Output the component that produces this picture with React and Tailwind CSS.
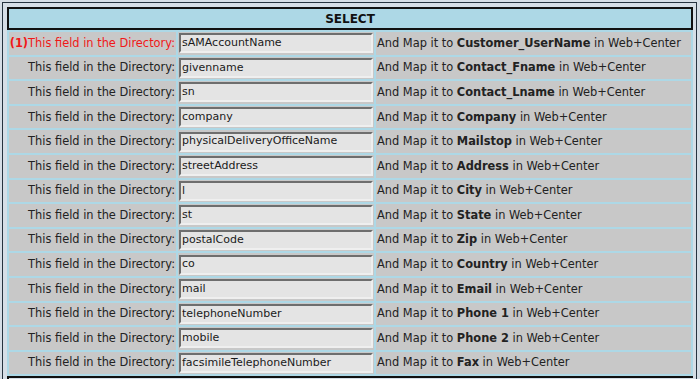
const rows = [
  ['sAMAccountName', 'Customer_UserName'],
  ['givenname', 'Contact_Fname'],
  ['sn', 'Contact_Lname'],
  ['company', 'Company'],
  ['physicalDeliveryOfficeName', 'Mailstop'],
  ['streetAddress', 'Address'],
  ['l', 'City'],
  ['st', 'State'],
  ['postalCode', 'Zip'],
  ['co', 'Country'],
  ['mail', 'Email'],
  ['telephoneNumber', 'Phone 1'],
  ['mobile', 'Phone 2'],
  ['facsimileTelephoneNumber', 'Fax'],
]

const font = { fontFamily: '"DejaVu Sans", Verdana, sans-serif' }

export default function App() {
  return (
    <div className="w-[700px] h-[379px] overflow-hidden bg-[#d6dee6] pt-[2px] pl-[2px] text-[11.4px] text-[#222]" style={font}>
      <div className="w-[695px] h-[400px] border-l border-t border-r border-[#26333f] pt-[4px] pl-[4px] pr-[3px]">
        {/* header */}
        <div className="h-[23px] border-2 border-[#111] bg-[#add8e6] flex items-center justify-center">
          <span className="font-bold text-[12px] text-[#111]">SELECT</span>
        </div>

        {/* mapping rows */}
        <div className="bg-[#add8e6] p-[2px] flex flex-col gap-[2px]">
          {rows.map(([field, target], i) => (
            <div key={field} className="flex gap-[2px] h-[22.6px]">
              <div className={`w-[167px] bg-[#c8c8c8] flex items-center justify-end pr-[1px] whitespace-nowrap ${i === 0 ? 'text-[#f01818]' : ''}`}>
                {i === 0 && <span className="font-bold">(1)</span>}
                This field in the Directory:
              </div>
              <div className="w-[196px] bg-[#c8c8c8] flex items-center px-[1px]">
                <div className="w-[194px] h-[20px] bg-[#e4e4e4] border-2 border-t-[#6e6e6e] border-l-[#6e6e6e] border-b-[#efefef] border-r-[#efefef] flex items-center pl-[1px] whitespace-nowrap overflow-hidden text-[#1a1a1a] text-[11px]">
                  {field}
                </div>
              </div>
              <div className="flex-1 bg-[#c8c8c8] flex items-center pl-[1px] whitespace-nowrap">
                And Map it to&nbsp;<b>{target}</b>&nbsp;in Web+Center
              </div>
            </div>
          ))}
        </div>
        <div className="h-[8px] border-t-2 border-l-2 border-[#111] bg-[#d6dee6]" />
      </div>
    </div>
  )
}
